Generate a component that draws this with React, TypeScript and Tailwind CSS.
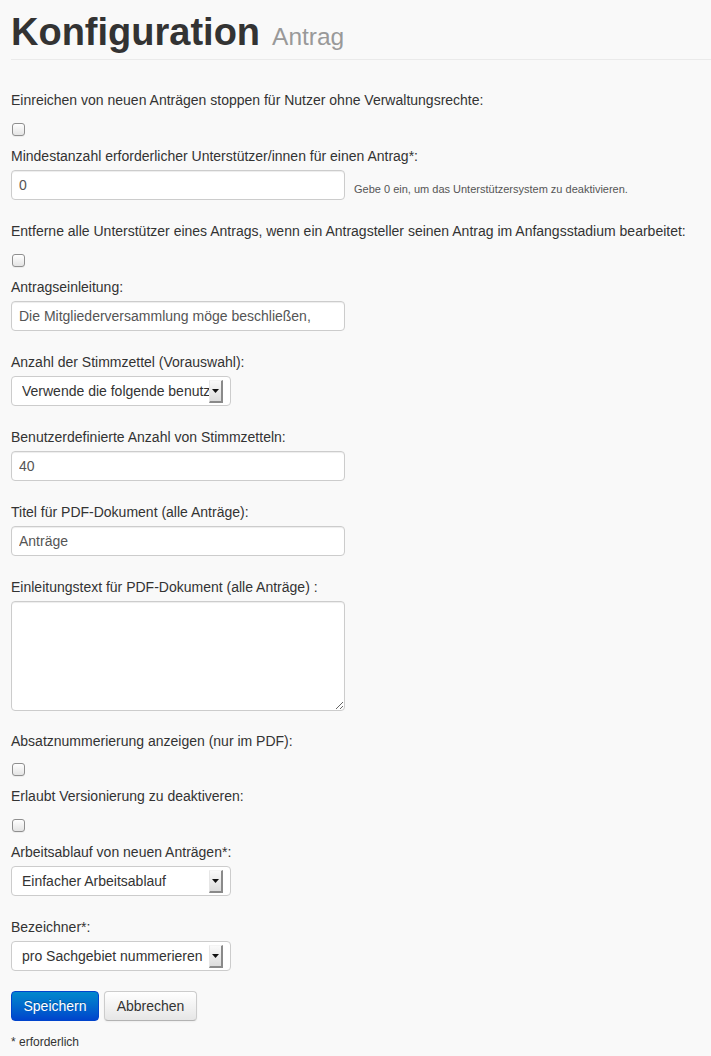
import type { ReactNode } from "react";

// ── Small form pieces (bootstrap-2 look) ─────────────────

function Label({ children }: { children: ReactNode }) {
  return <div className="text-[14px] leading-[20px] text-[#333]">{children}</div>;
}

function Checkbox({ tight }: { tight?: boolean }) {
  return (
    <div className={tight ? "flex h-[35px] items-center pl-px pt-[2px]" : "flex h-9 items-center pl-px pt-[2px]"}>
      <span className="block h-[13px] w-[13px] rounded-[3px] border border-[#8f8f8f] bg-gradient-to-b from-white to-[#e4e4e4] shadow-[0_1px_0_rgba(0,0,0,0.05)]" />
    </div>
  );
}

function TextInput({ value }: { value: string }) {
  return (
    <input
      type="text"
      defaultValue={value}
      className="block h-[30px] w-[334px] rounded-[4px] border border-[#ccc] bg-white px-[7px] text-[14px] text-[#555] shadow-[inset_0_1px_1px_rgba(0,0,0,0.075)] outline-none"
    />
  );
}

function Select({ value }: { value: string }) {
  return (
    <div className="flex h-[30px] w-[220px] items-center rounded-[4px] border border-[#ccc] bg-white pl-[10px] pr-[7px]">
      <span className="flex-1 overflow-hidden whitespace-nowrap text-[14px] text-[#333]">{value}</span>
      <span className="flex h-[23px] w-[14px] shrink-0 items-center justify-center border-r-2 border-b-2 border-l border-t border-r-[#8a8a8a] border-b-[#8a8a8a] border-l-[#e6e6e6] border-t-[#f4f4f4] bg-gradient-to-b from-[#fafafa] to-[#dcdcdc]">
        <svg width="7" height="4" viewBox="0 0 7 4">
          <path d="M0 0 L7 0 L3.5 4 Z" fill="#111" />
        </svg>
      </span>
    </div>
  );
}

function Field({ label, children, gap = 21 }: { label: string; children: ReactNode; gap?: number }) {
  return (
    <div className={gap === 20 ? "mb-[20px]" : "mb-[21px]"}>
      <div className="mb-[4px]">
        <Label>{label}</Label>
      </div>
      {children}
    </div>
  );
}

function CheckField({ label, tight }: { label: string; tight?: boolean }) {
  return (
    <div>
      <Label>{label}</Label>
      <Checkbox tight={tight} />
    </div>
  );
}

// ── Page ─────────────────────────────────────────────────

export default function App() {
  return (
    <div className="min-h-[1056px] bg-[#f9f9f9] pl-[11px] font-['Liberation_Sans',Arial,sans-serif]">
      <div className="border-b border-[#eaeaea] pt-[12px] pb-[7px]">
        <h1 className="h-[40px] leading-[40px] whitespace-nowrap">
          <span className="text-[38px] font-bold text-[#333]">Konfiguration</span>
          <span className="ml-[12px] text-[24.5px] leading-none text-[#999]">Antrag</span>
        </h1>
      </div>

      <div className="pt-[30px]">
        <CheckField label="Einreichen von neuen Anträgen stoppen für Nutzer ohne Verwaltungsrechte:" />

        <Field label="Mindestanzahl erforderlicher Unterstützer/innen für einen Antrag*:">
          <div className="flex items-center">
            <TextInput value="0" />
            <span className="ml-[9px] pt-[8px] text-[11px] text-[#555]">
              Gebe 0 ein, um das Unterstützersystem zu deaktivieren.
            </span>
          </div>
        </Field>

        <CheckField label="Entferne alle Unterstützer eines Antrags, wenn ein Antragsteller seinen Antrag im Anfangsstadium bearbeitet:" />

        <Field label="Antragseinleitung:">
          <TextInput value="Die Mitgliederversammlung möge beschließen," />
        </Field>

        <Field label="Anzahl der Stimmzettel (Vorauswahl):">
          <Select value="Verwende die folgende benutzerdefinierte Anzahl" />
        </Field>

        <Field label="Benutzerdefinierte Anzahl von Stimmzetteln:">
          <TextInput value="40" />
        </Field>

        <Field label="Titel für PDF-Dokument (alle Anträge):">
          <TextInput value="Anträge" />
        </Field>

        <Field label="Einleitungstext für PDF-Dokument (alle Anträge) :" gap={20}>
          <textarea className="block h-[110px] w-[334px] rounded-[4px] border border-[#ccc] bg-white px-[7px] py-[4px] text-[14px] text-[#555] shadow-[inset_0_1px_1px_rgba(0,0,0,0.075)] outline-none" />
        </Field>

        <CheckField label="Absatznummerierung anzeigen (nur im PDF):" tight />
        <CheckField label="Erlaubt Versionierung zu deaktiveren:" />

        <Field label="Arbeitsablauf von neuen Anträgen*:">
          <Select value="Einfacher Arbeitsablauf" />
        </Field>

        <Field label="Bezeichner*:" gap={20}>
          <Select value="pro Sachgebiet nummerieren" />
        </Field>

        <div className="flex gap-[5px]">
          <button className="h-[30px] w-[88px] rounded-[4px] border border-[#0044cc] bg-gradient-to-b from-[#0088cc] to-[#0044cc] text-[14px] text-white [text-shadow:0_-1px_0_rgba(0,0,0,0.25)]">
            Speichern
          </button>
          <button className="h-[30px] w-[93px] rounded-[4px] border border-[#ccc] border-b-[#b3b3b3] bg-gradient-to-b from-white to-[#e6e6e6] text-[14px] text-[#333] shadow-[0_1px_2px_rgba(0,0,0,0.05)]">
            Abbrechen
          </button>
        </div>

        <div className="pt-[13px] text-[12px] leading-[16px] text-[#333]">* erforderlich</div>
      </div>
    </div>
  );
}
